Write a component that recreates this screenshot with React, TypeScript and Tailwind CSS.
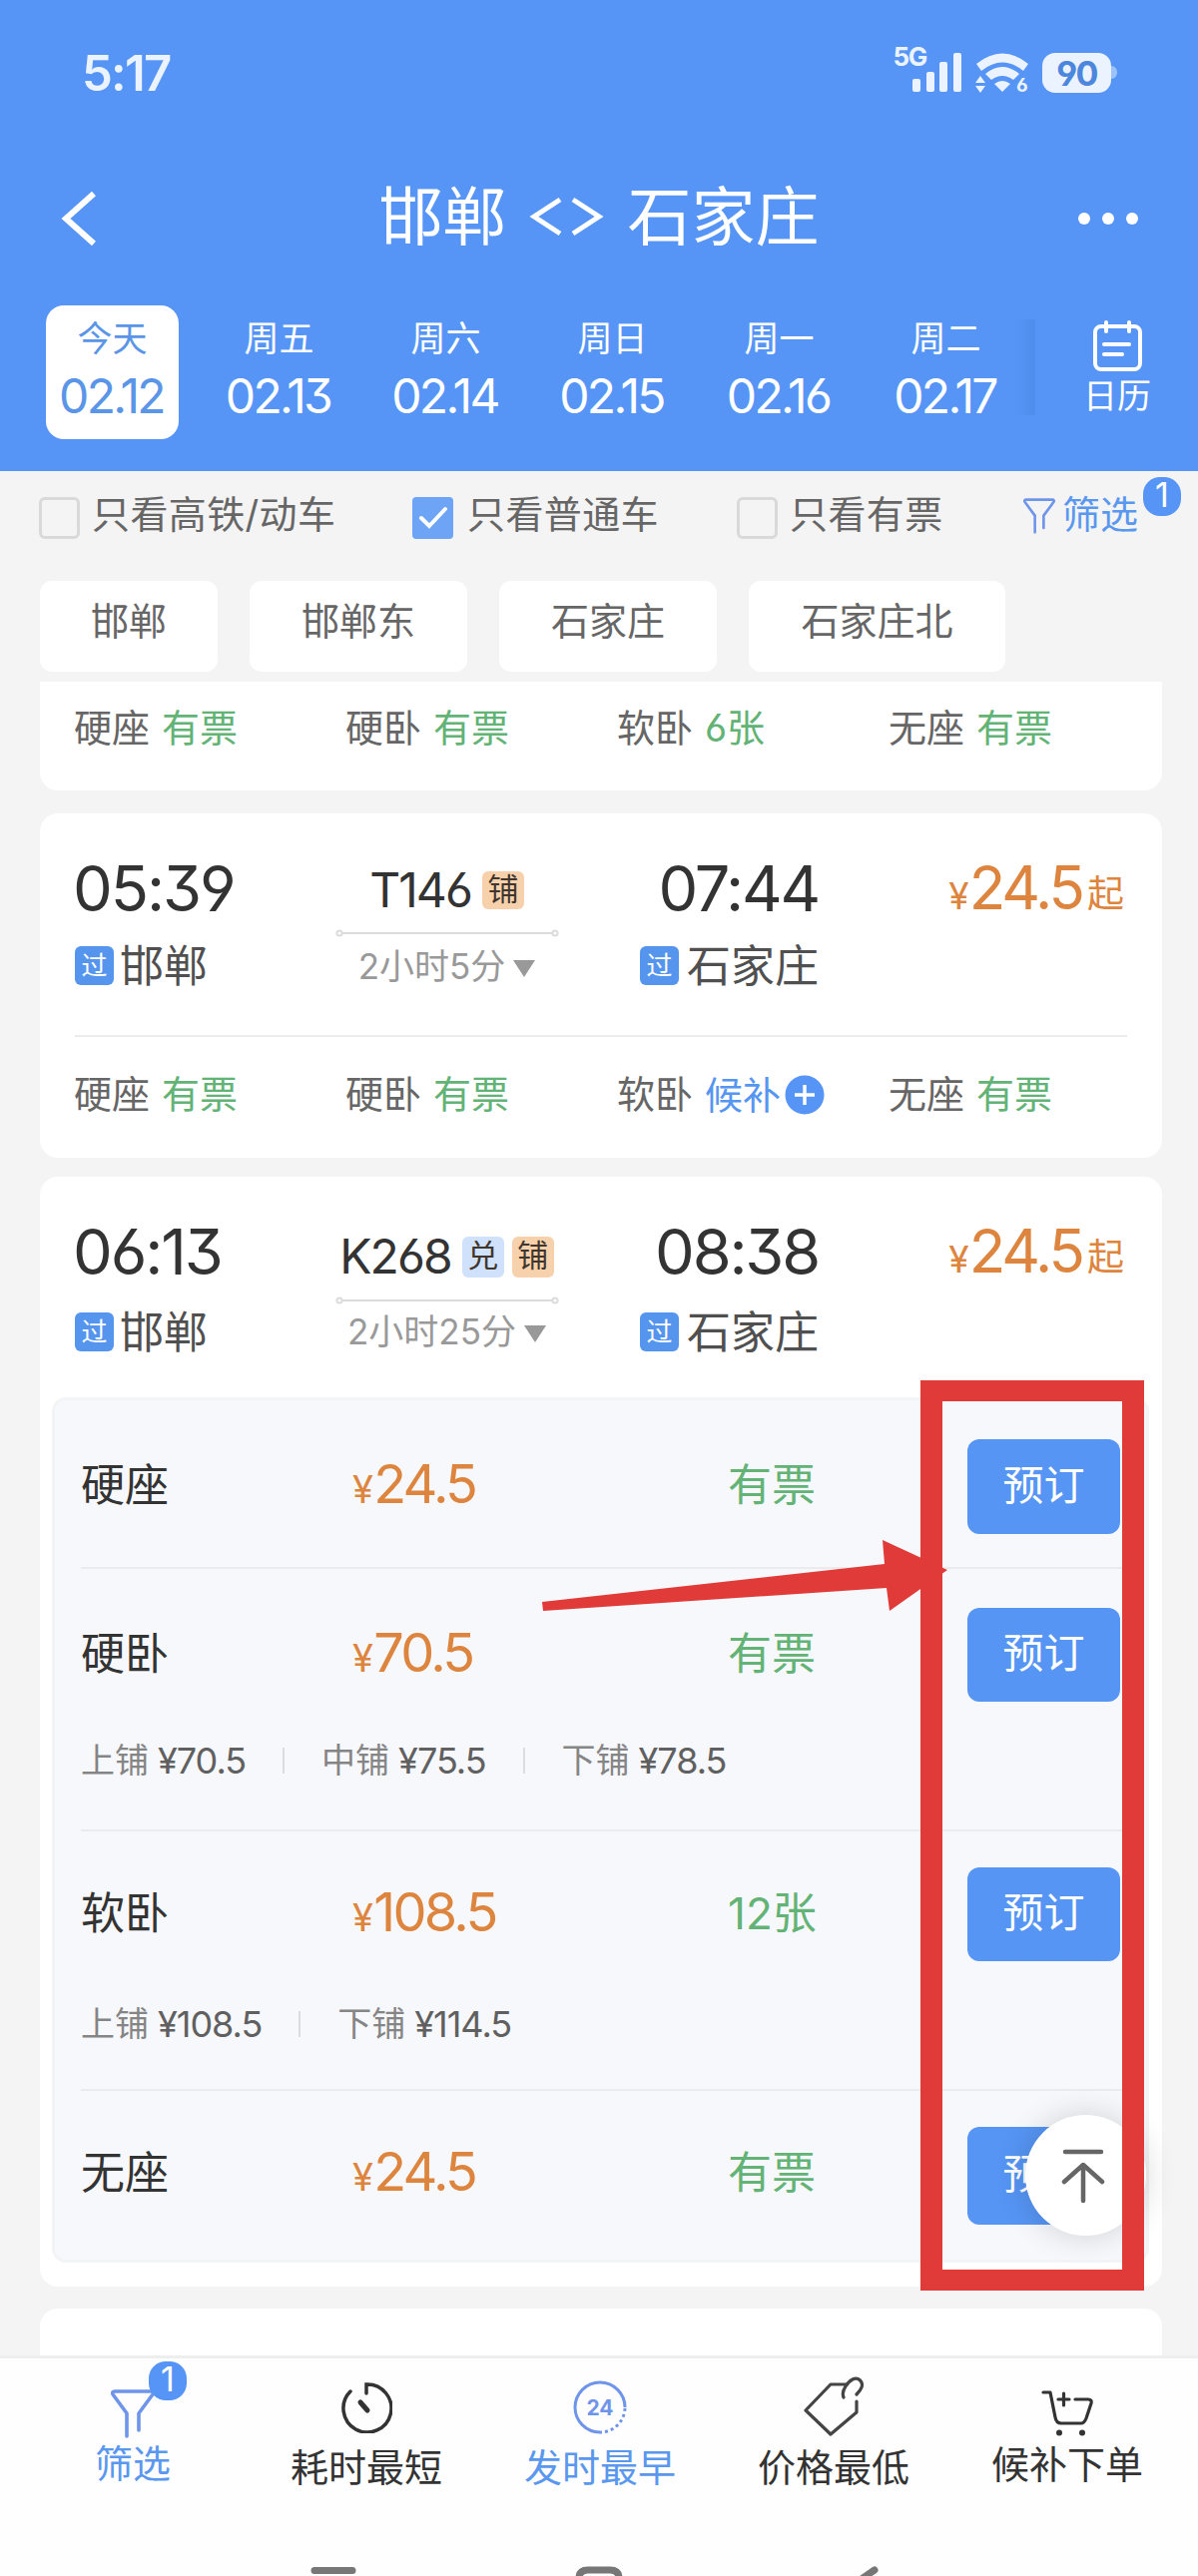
import type { ReactNode } from "react";
import clsx from "clsx";

const dates = [
  { day: "今天", date: "02.12" },
  { day: "周五", date: "02.13" },
  { day: "周六", date: "02.14" },
  { day: "周日", date: "02.15" },
  { day: "周一", date: "02.16" },
  { day: "周二", date: "02.17" },
];

const stations = [
  { name: "邯郸", width: "w-[178px]" },
  { name: "邯郸东", width: "w-[218px]" },
  { name: "石家庄", width: "w-[218px]" },
  { name: "石家庄北", width: "w-[257px]" },
];

interface Seat {
  name: string;
  status: string;
  waitlist?: boolean;
}

interface Fare {
  name: string;
  price: string;
  status: string;
  berths?: { name: string; price: string }[];
  berthGap?: string;
  row: string;
  button: string;
}

const fares: Fare[] = [
  { name: "硬座", price: "24.5", status: "有票", row: "h-[169px] pt-[39px]", button: "h-[95px]" },
  {
    name: "硬卧",
    price: "70.5",
    status: "有票",
    row: "h-[263px] pt-[39px]",
    button: "h-[94px]",
    berthGap: "mt-[39px]",
    berths: [
      { name: "上铺", price: "¥70.5" },
      { name: "中铺", price: "¥75.5" },
      { name: "下铺", price: "¥78.5" },
    ],
  },
  {
    name: "软卧",
    price: "108.5",
    status: "12张",
    row: "h-[260px] pt-[36px]",
    button: "h-[94px]",
    berthGap: "mt-[43px]",
    berths: [
      { name: "上铺", price: "¥108.5" },
      { name: "下铺", price: "¥114.5" },
    ],
  },
  { name: "无座", price: "24.5", status: "有票", row: "h-[169px] pt-[36px]", button: "h-[98px]" },
];

function StatusBar() {
  return (
    <div className="flex h-[128px] items-start justify-between pl-[82px] pr-[81px] pt-[48px] text-[#eaf3ff]">
      <span className="mt-[2px] text-[49px] font-semibold leading-[48px] tracking-[-0.035em]">5:17</span>
      <div className="flex items-start">
        <span className="-mt-[2px] -mr-[14px] text-[26px] font-bold leading-[22px] tracking-[-0.05em]">5G</span>
        <svg className="mt-[5px]" width="49" height="39" viewBox="0 0 49 39" fill="currentColor">
          <rect x="0" y="26" width="8" height="13" rx="2" />
          <rect x="14" y="19" width="8" height="20" rx="2" />
          <rect x="27" y="9" width="8" height="30" rx="2" />
          <rect x="41" y="0" width="8" height="39" rx="2" />
        </svg>
        <svg className="ml-[13px] mt-[5px] overflow-visible" width="56" height="42" viewBox="0 0 56 42" fill="currentColor">
          <path d="M2 11Q28 -10 54 11L49 18Q28 1 7 18Z" />
          <path d="M11 21Q28 7 45 21L39 27Q28 19 17 27Z" />
          <path d="M20 31Q28 25 36 31L28 39Z" />
          <path d="M1 30L6 23L11 30ZM1 33L6 40L11 33Z" />
          <text x="42" y="39" fontSize="19" fontWeight="700">6</text>
        </svg>
        <div className="ml-[12px] mt-[5px] flex h-[40px] w-[69px] items-center justify-center rounded-[13px] bg-[#eaf3ff] text-[34px] font-bold tracking-[-0.05em] text-[#4c86dd]">
          90
        </div>
        <div className="mt-[18px] h-[13px] w-[6px] rounded-r-full bg-[#9cc2fa]" />
      </div>
    </div>
  );
}

function Header() {
  return (
    <header className="h-[472px] bg-[#5695f6] text-white">
      <StatusBar />
      <div className="flex h-[178px] items-start justify-between pl-[60px] pr-[60px]">
        <svg className="mt-[64px]" width="38" height="54" viewBox="0 0 38 54" fill="none" stroke="currentColor" strokeWidth="6">
          <path d="M34 2L6 27L34 52" />
        </svg>
        <h1 className="ml-[22px] mt-[57px] flex items-center text-[64px] leading-[64px]">
          邯郸
          <svg className="ml-[22px] mr-[24px]" width="75" height="40" viewBox="0 0 75 40" fill="none" stroke="currentColor" strokeWidth="5">
            <path d="M31 3L5 20L31 37M44 3L70 20L44 37" />
          </svg>
          石家庄
        </h1>
        <div className="mt-[85px] flex gap-[12px]">
          <i className="size-[12px] rounded-full bg-white" />
          <i className="size-[12px] rounded-full bg-white" />
          <i className="size-[12px] rounded-full bg-white" />
        </div>
      </div>
      <div className="flex pl-[46px]">
        {dates.map((item, index) => (
          <div
            key={item.date}
            className={clsx(
              "mr-[34px] flex h-[134px] w-[133px] flex-col items-center rounded-[18px]",
              index === 0 && "bg-white text-[#5a95e8]"
            )}
          >
            <span className="mt-[15px] text-[35px] leading-[36px]">{item.day}</span>
            <span className="-ml-[2px] mt-[16px] text-[48px] leading-[48px] tracking-[-0.055em]">{item.date}</span>
          </div>
        ))}
        <div className="-ml-[33px] mt-[14px] h-[96px] w-[22px] bg-gradient-to-r from-transparent to-[#508ded]" />
        <div className="ml-[48px] mt-[15px] flex flex-col items-center">
          <svg width="51" height="52" viewBox="0 0 51 52" fill="none" stroke="currentColor" strokeWidth="4" strokeLinecap="round">
            <rect x="3" y="6" width="45" height="43" rx="6" />
            <path d="M14 2V11M37 2V11M12 24H37M12 34H30" />
          </svg>
          <span className="mt-[6px] text-[34px] leading-[36px]">日历</span>
        </div>
      </div>
    </header>
  );
}

function Checkbox({ checked }: { checked?: boolean }) {
  if (!checked) {
    return <span className="h-[42px] w-[41px] shrink-0 rounded-[6px] border-[3px] border-[#d9d9d9]" />;
  }
  return (
    <span className="flex h-[42px] w-[41px] shrink-0 items-center justify-center rounded-[4px] bg-[#6da4f5]">
      <svg width="30" height="24" viewBox="0 0 30 24" fill="none" stroke="white" strokeWidth="4" strokeLinecap="round">
        <path d="M3 12L11 20L27 3" />
      </svg>
    </span>
  );
}

function Funnel({ className }: { className: string }) {
  return (
    <svg className={className} viewBox="0 0 44 49" fill="none" stroke="#6f95ea" strokeWidth="3.6" strokeLinecap="round" strokeLinejoin="round">
      <path d="M16 47V24L2 5Q1 2 4 2H40Q43 2 42 5L28 24V41" />
    </svg>
  );
}

function FilterRow() {
  return (
    <div className="relative flex h-[110px] items-start pt-[26px] text-[38px] leading-[38px] text-[#666]">
      <div className="flex w-[413px] items-start gap-[12px] pl-[39px]">
        <Checkbox />
        <span className="-mt-[2px] whitespace-nowrap tracking-[0.01em]">只看高铁/动车</span>
      </div>
      <div className="flex w-[325px] items-start gap-[14px]">
        <Checkbox checked />
        <span className="-mt-[2px] tracking-[0.01em]">只看普通车</span>
      </div>
      <div className="flex w-[287px] items-start gap-[12px]">
        <Checkbox />
        <span className="-mt-[2px] whitespace-nowrap tracking-[0.01em]">只看有票</span>
      </div>
      <div className="flex items-start gap-[7px] text-[#5a97ee]">
        <Funnel className="mt-[1px] h-[36px] w-[32px]" />
        <span className="-mt-[2px]">筛选</span>
      </div>
      <Badge className="right-[17px] top-[6px]" />
    </div>
  );
}

function Badge({ className }: { className: string }) {
  return (
    <span className={clsx("absolute flex h-[39px] w-[38px] justify-center rounded-[17px] bg-[#5695f6] text-[34px] leading-[36px] text-white", className)}>
      1
    </span>
  );
}

function SeatRow({ seats }: { seats: Seat[] }) {
  return (
    <div className="flex pl-[34px] text-[38px] leading-[38px] text-[#666]">
      {seats.map((seat) => (
        <div key={seat.name} className="flex w-[272px] gap-[12px] whitespace-nowrap">
          {seat.name}
          {seat.waitlist ? (
            <span className="flex items-center text-[#5695f0]">
              {seat.status}
              <svg className="ml-[4px]" width="40" height="40" viewBox="0 0 40 40">
                <circle cx="20" cy="20" r="19.5" fill="#5695f6" />
                <path d="M10 20H30M20 10V30" stroke="white" strokeWidth="3.5" />
              </svg>
            </span>
          ) : (
            <span className="text-[#62b375]">{seat.status}</span>
          )}
        </div>
      ))}
    </div>
  );
}

function Tag({ children, className }: { children: ReactNode; className: string }) {
  return (
    <span className={clsx("flex w-[42px] justify-center rounded-[6px] text-[31px] tracking-normal text-[#40362e]", className)}>
      {children}
    </span>
  );
}

function Place({ name }: { name: string }) {
  return (
    <div className="flex items-start text-[44px] leading-[44px] text-[#505050]">
      <span className="mt-[2px] flex size-[39px] items-center justify-center rounded-[6px] bg-[#5695ee] text-[26px] leading-none text-white">
        过
      </span>
      {name}
    </div>
  );
}

interface TripProps {
  depart: string;
  arrive: string;
  train: string;
  duration: string;
  tags: ReactNode;
  expanded?: boolean;
}

function Trip({ depart, arrive, train, duration, tags, expanded }: TripProps) {
  return (
    <div className="flex pl-[35px] pt-[44px]">
      <div className="w-[261px]">
        <div className="-ml-[2px] text-[63px] leading-[63px] tracking-[-0.033em] text-[#333]">{depart}</div>
        <div className={clsx("[&>div]:gap-[6px]", expanded ? "mt-[27px]" : "mt-[24px]")}>
          <Place name="邯郸" />
        </div>
      </div>
      <div className="flex w-[223px] flex-col items-center">
        <div className={clsx("flex h-[42px] items-center gap-[8px] whitespace-nowrap text-[48px] tracking-[-0.04em] text-[#333]", expanded ? "mt-[15px]" : "mt-[12px]")}>
          <span className="mr-[3px]">{train}</span>
          {tags}
        </div>
        <svg className={expanded ? "mt-[19px]" : "mt-[18px]"} width="224" height="8" viewBox="0 0 224 8" fill="white" stroke="#dcdcdc" strokeWidth="2">
          <path d="M6 4H218" />
          <circle cx="4" cy="4" r="2.6" />
          <circle cx="220" cy="4" r="2.6" />
        </svg>
        <div className={clsx("flex items-center whitespace-nowrap text-[35px] leading-[36px] text-[#999]", expanded ? "mt-[9px]" : "mt-[11px]")}>
          {duration}
          <svg className="ml-[8px] mt-[4px]" width="22" height="17" viewBox="0 0 22 17" fill="#999">
            <path d="M0 0H22L11 17Z" />
          </svg>
        </div>
      </div>
      <div className="flex w-[261px] flex-col items-end">
        <div className="text-[63px] leading-[63px] tracking-[-0.035em] text-[#333]">{arrive}</div>
        <div className={clsx("[&>div]:gap-[8px]", expanded ? "mt-[27px]" : "mt-[24px]")}>
          <Place name="石家庄" />
        </div>
      </div>
      <div className="flex flex-1 items-baseline justify-end self-start pr-[38px] text-[60px] leading-[60px] tracking-[-0.05em] text-[#dd853e]">
        <span className="mr-[3px] text-[37px]">¥</span>
        24.5
        <span className="relative -top-[2px] ml-[5px] text-[37px] tracking-normal">起</span>
      </div>
    </div>
  );
}

function FareRow({ fare, last }: { fare: Fare; last: boolean }) {
  return (
    <div className={clsx("ml-[26px] mr-[24px] border-[#ebebee]", !last && "border-b-2", fare.row)}>
      <div className="flex items-start">
        <span className="mt-[24px] w-[272px] text-[44px] leading-[44px] text-[#333]">{fare.name}</span>
        <span className="mt-[15px] flex w-[376px] items-baseline text-[54px] leading-[60px] tracking-[-0.05em] text-[#dd853e]">
          <span className="mr-[3px] text-[38px]">¥</span>
          {fare.price}
        </span>
        <span className="mt-[24px] w-[240px] text-[44px] leading-[44px] text-[#62b375]">{fare.status}</span>
        <button className={clsx("w-[153px] rounded-[12px] bg-[#5695f4] pb-[3px] text-[41px] leading-[41px] text-white", fare.button)}>
          预订
        </button>
      </div>
      {fare.berths && (
        <div className={clsx("flex items-center text-[34px] leading-[40px] text-[#858585]", fare.berthGap)}>
          {fare.berths.map((berth, index) => (
            <div key={berth.name} className="flex items-center">
              {index > 0 && <i className="ml-[37px] mr-[37px] h-[26px] w-[2px] bg-[#dcdcde]" />}
              {berth.name}
              <span className="ml-[9px] text-[36px] tracking-[-0.028em] text-[#606060]">{berth.price}</span>
            </div>
          ))}
        </div>
      )}
    </div>
  );
}

function BottomNav() {
  const item = "flex w-[234px] flex-col items-center text-[38px] leading-[38px]";
  return (
    <nav className="h-[221px] border-t-[3px] border-[#eee] bg-[#fefefe] text-[#333]">
      <div className="flex h-[206px] pl-[16px]">
        <div className={clsx(item, "relative text-[#5a97ee]")}>
          <Funnel className="mt-[31px] h-[49px] w-[44px]" />
          <span className="mt-[6px]">筛选</span>
          <Badge className="left-[133px] top-[3px]" />
        </div>
        <div className={item}>
          <svg className="mt-[23px]" width="52" height="52" viewBox="0 0 52 52" fill="none" stroke="#333" strokeWidth="3.5" strokeLinecap="round">
            <path d="M26 12V3A24 24 0 1 1 10 10" />
            <path d="M20 21L27 29" strokeWidth="5" />
          </svg>
          <span className="mt-[15px]">耗时最短</span>
        </div>
        <div className={clsx(item, "text-[#5a97ee]")}>
          <svg className="mt-[22px]" width="54" height="54" viewBox="0 0 54 54" fill="none" stroke="#6f95ea" strokeWidth="3">
            <path d="M27 52A25 25 0 1 1 52 27" />
            <path d="M52 28A25 25 0 0 1 27 52" strokeDasharray="3 3" />
            <text x="27" y="35" textAnchor="middle" fontSize="21" fontWeight="700" stroke="none" fill="#6f95ea">24</text>
          </svg>
          <span className="mt-[14px]">发时最早</span>
        </div>
        <div className={item}>
          <svg className="mt-[18px]" width="60" height="60" viewBox="0 0 60 60" fill="none" stroke="#444" strokeWidth="3.2" strokeLinecap="round" strokeLinejoin="round">
            <path d="M53 25V36L27 58L2 34L27 8H43" />
            <path d="M40 21C37 14 45 5 49 3C55 0 60 6 58 11C57 14 55 16 53 18" />
          </svg>
          <span className="mt-[12px]">价格最低</span>
        </div>
        <div className={item}>
          <svg className="mt-[31px]" width="52" height="48" viewBox="0 0 52 48" fill="none" stroke="#333" strokeWidth="3.2" strokeLinecap="round" strokeLinejoin="round">
            <path d="M2 3H9L14 28Q15 34 20 34H40Q43 34 45 29L50 14Q51 10 47 10H34" />
            <path d="M17 10H28M22.500 4V16" />
            <circle cx="18" cy="43.500" r="3" fill="#333" stroke="none" />
            <circle cx="41" cy="43.500" r="3" fill="#333" stroke="none" />
          </svg>
          <span className="mt-[8px]">候补下单</span>
        </div>
      </div>
      <svg width="1200" height="12" viewBox="0 0 1200 12" fill="none" stroke="#777" strokeWidth="7" strokeLinecap="round">
        <path d="M315 6.500H353M580 20V14Q580 6 589 6H611Q620 6 620 14V20M860 17L876 6" />
      </svg>
    </nav>
  );
}

export default function App() {
  return (
    <div className="relative flex h-[2581px] w-[1200px] flex-col overflow-hidden bg-[#f4f4f4] font-['Inter','Noto_Sans_CJK_SC',sans-serif] [font-feature-settings:'cv03','cv04','cv09']">
      <Header />
      <FilterRow />
      <div className="flex gap-[32px] pl-[40px] text-[38px] text-[#666]">
        {stations.map((station) => (
          <div key={station.name} className={clsx("h-[91px] rounded-[12px] bg-white pt-[21px] text-center leading-[38px]", station.width)}>
            {station.name}
          </div>
        ))}
      </div>

      <main className="mt-[10px] flex h-[1677px] flex-col overflow-hidden pl-[40px] pr-[36px]">
        <section className="h-[109px] shrink-0 rounded-b-[18px] bg-white pt-[27px]">
          <SeatRow
            seats={[
              { name: "硬座", status: "有票" },
              { name: "硬卧", status: "有票" },
              { name: "软卧", status: "6张" },
              { name: "无座", status: "有票" },
            ]}
          />
        </section>

        <section className="mt-[23px] h-[345px] shrink-0 rounded-[18px] bg-white">
          <div className="h-[222px]">
            <Trip
              depart="05:39"
              arrive="07:44"
              train="T146"
              duration="2小时5分"
              tags={<Tag className="h-[38px] bg-[#f7d1ac] leading-[36px]">铺</Tag>}
            />
          </div>
          <div className="mx-[35px] mb-[38px] h-[2px] bg-[#ececec]" />
          <SeatRow
            seats={[
              { name: "硬座", status: "有票" },
              { name: "硬卧", status: "有票" },
              { name: "软卧", status: "候补", waitlist: true },
              { name: "无座", status: "有票" },
            ]}
          />
        </section>

        <section className="mt-[19px] h-[1112px] shrink-0 rounded-[18px] bg-white">
          <div className="h-[221px]">
            <Trip
              depart="06:13"
              arrive="08:38"
              train="K268"
              duration="2小时25分"
              expanded
              tags={
                <>
                  <Tag className="h-[41px] bg-[#d0e1fb] leading-[38px]">兑</Tag>
                  <Tag className="h-[41px] bg-[#f7d1ac] leading-[38px]">铺</Tag>
                </>
              }
            />
          </div>
          <div className="ml-[12px] mr-[13px] h-[867px] rounded-[14px] border-[3px] border-[#f2f4f6] bg-[#f7f8fc]">
            {fares.map((fare, index) => (
              <FareRow key={fare.name} fare={fare} last={index === fares.length - 1} />
            ))}
          </div>
        </section>

        <section className="mt-[22px] h-[80px] shrink-0 rounded-[18px] bg-white" />
      </main>

      <BottomNav />

      <button className="absolute left-[1027px] top-[2119px] flex size-[121px] items-center justify-center rounded-full bg-white shadow-[0_0_32px_rgba(0,0,0,0.16)]">
        <svg className="-ml-[4px]" width="46" height="56" viewBox="0 0 46 56" fill="none" stroke="#666" strokeWidth="4.5" strokeLinecap="round" strokeLinejoin="round">
          <path d="M4 4H40M22 17V53M3 34L22 17L41 34" />
        </svg>
      </button>

      {/* marks the booking buttons */}
      <div className="absolute left-[922px] top-[1383px] h-[912px] w-[224px] border-x-[22px] border-y-[21px] border-[#e13b39]" />
      <svg className="absolute left-[540px] top-[1540px]" width="412" height="78" viewBox="0 0 412 78" fill="#e13b39">
        <path d="M3 65L346 27L344 3L409 33L351 74L348 51L4 74Z" />
      </svg>
    </div>
  );
}
